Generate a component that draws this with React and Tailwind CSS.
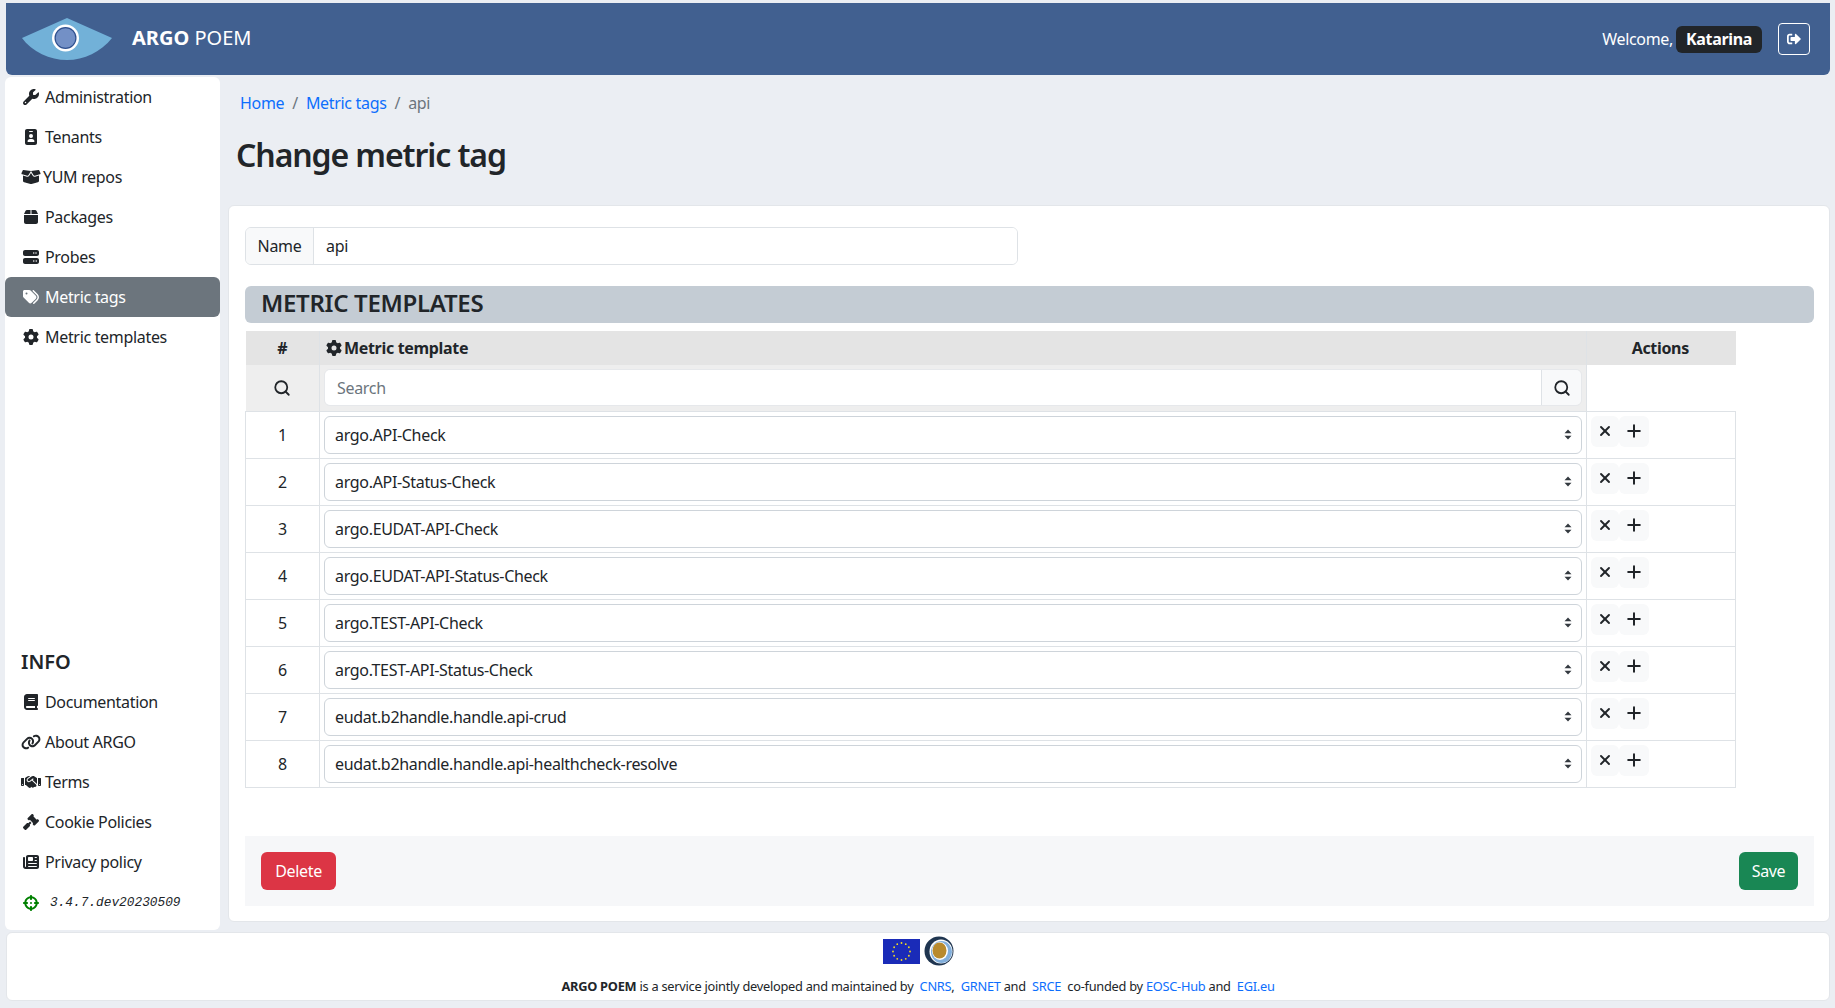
import React from "react";
import {
  FaWrench, FaIdBadge, FaBoxOpen, FaBox, FaServer, FaTags, FaGear, FaBook, FaLink,
  FaHandshake, FaGavel, FaNewspaper, FaCrosshairs,
} from "react-icons/fa6";
import { FaSignOutAlt } from "react-icons/fa";
import { Search, X, Plus } from "lucide-react";

const font = { fontFamily: '"Noto Sans", "Open Sans", sans-serif' };

const S = "w-[16px] h-[16px]";
const W = "w-[20px] h-[16px]";
const N = "w-[18px] h-[16px]";

const top = [
  [FaWrench, "Administration", S],
  [FaIdBadge, "Tenants", S],
  [FaBoxOpen, "YUM repos", W, "ml-[-2px]"],
  [FaBox, "Packages", S],
  [FaServer, "Probes", S],
  [FaTags, "Metric tags", N],
  [FaGear, "Metric templates", S],
];
const info = [
  [FaBook, "Documentation", S],
  [FaLink, "About ARGO", W],
  [FaHandshake, "Terms", W],
  [FaGavel, "Cookie Policies", S],
  [FaNewspaper, "Privacy policy", S],
];
const rows = [
  "argo.API-Check",
  "argo.API-Status-Check",
  "argo.EUDAT-API-Check",
  "argo.EUDAT-API-Status-Check",
  "argo.TEST-API-Check",
  "argo.TEST-API-Status-Check",
  "eudat.b2handle.handle.api-crud",
  "eudat.b2handle.handle.api-healthcheck-resolve",
];

function NavItem({ icon: Icon, label, size, shift = "", active }) {
  return (
    <div className={`h-10 flex items-center pl-4 rounded-md ${active ? "bg-[#6c757d] text-white" : "text-[#212529]"}`}>
      <span className="w-[24px] flex justify-center pr-[4px] shrink-0"><Icon className={`${size} shrink-0`} /></span>
      <span className={shift}>{label}</span>
    </div>
  );
}

function Eye() {
  return (
    <svg width="92" height="44" viewBox="0 0 92 44" className="block">
      <path d="M46 1 L91 21 C80 35 63 43 46 43 C29 43 11 35 1 21 Z" fill="#72b1d8" />
      <circle cx="44.5" cy="21" r="13.5" fill="#fff" />
      <circle cx="44.5" cy="21" r="11" fill="#2d4f8e" />
      <circle cx="44.5" cy="21" r="9.8" fill="#7390c6" />
    </svg>
  );
}

function EuFlag() {
  const stars = Array.from({ length: 12 }, (_, i) => {
    const a = (i * Math.PI) / 6;
    return [18.5 + 8.5 * Math.cos(a), 12.5 + 8.5 * Math.sin(a)];
  });
  return (
    <svg width="37" height="25" viewBox="0 0 37 25" className="block">
      <rect width="37" height="25" fill="#1a2bb8" />
      {stars.map(([x, y], i) => <circle key={i} cx={x} cy={y} r="0.9" fill="#f2dc22" />)}
    </svg>
  );
}

function EoscLogo() {
  return (
    <svg width="30" height="30" viewBox="0 0 30 30" className="block">
      <circle cx="15" cy="15" r="14.5" fill="#1f3550" />
      <ellipse cx="17" cy="15.5" rx="11.5" ry="12" fill="#fff" />
      <ellipse cx="17.5" cy="16" rx="10.5" ry="11" fill="#82afdc" />
      <ellipse cx="16" cy="15" rx="8" ry="9" fill="#fff" />
      <ellipse cx="15.5" cy="14.5" rx="7" ry="8" fill="#b88a2e" />
    </svg>
  );
}

function Arrows() {
  return (
    <svg width="8" height="11" viewBox="0 0 8 11" className="block">
      <path d="M4 0.5 L7.5 4.3 H0.5 Z M4 10.5 L0.5 6.7 H7.5 Z" fill="#343a40" />
    </svg>
  );
}

const td = "border border-[#dee2e6]";

export default function App() {
  return (
    <div style={font} className="w-[1835px] h-[1008px] overflow-hidden bg-[#ebeef3] text-[16px] tracking-[-0.32px] text-[#212529] pt-[3px] flex flex-col">
      <header className="h-[72px] mx-[6px] w-[1824px] rounded-b-md bg-[#416090] flex items-center justify-between pl-[15px] pr-[20px] shrink-0">
        <div className="flex items-center">
          <Eye />
          <span className="ml-[19px] mb-[3px] text-[20px] tracking-normal text-white"><b className="font-bold">ARGO</b> POEM</span>
        </div>
        <div className="flex items-center text-white">
          <span className="mb-[1px]">Welcome,</span>
          <span className="ml-[3px] h-[27px] w-[86px] justify-center rounded-md bg-[#212529] font-bold flex items-center">Katarina</span>
          <span className="ml-[16px] w-8 h-8 rounded border border-white flex items-center justify-center"><FaSignOutAlt className="text-[14px]" /></span>
        </div>
      </header>

      <div className="flex mt-[2px] shrink-0 h-[853px]">
        <aside className="ml-[5px] w-[215px] bg-white rounded-md flex flex-col">
          <nav>
            {top.map(([I, l, s, sh]) => <NavItem key={l} icon={I} label={l} size={s} shift={sh} active={l === "Metric tags"} />)}
          </nav>
          <div className="mt-auto mb-[6px]">
            <div className="h-[24px] pl-[16px] text-[20px] tracking-normal font-semibold leading-[24px] mb-[8px]">INFO</div>
            {info.map(([I, l, s]) => <NavItem key={l} icon={I} label={l} size={s} />)}
            <div className="h-[42px] flex items-center pl-4">
              <span className="w-[24px] flex justify-center pr-[4px] shrink-0"><FaCrosshairs className="text-[16px] text-[#008000]" /></span>
              <span className="ml-[5px] text-[12.8px] tracking-normal italic" style={{ fontFamily: '"Liberation Mono", monospace' }}>3.4.7.dev20230509</span>
            </div>
          </div>
        </aside>

        <main className="ml-[8px] w-[1602px]">
          <div className="h-[52px] pl-[12px] flex items-center">
            <a className="text-[#0d6efd]">Home</a>
            <span className="mx-[8px] text-[#6c757d]">/</span>
            <a className="text-[#0d6efd]">Metric tags</a>
            <span className="mx-[8px] text-[#6c757d]">/</span>
            <span className="text-[#6c757d]">api</span>
          </div>
          <h1 className="h-[48px] pl-[8px] text-[32px] leading-[48px] tracking-[-1.1px] font-semibold mt-[2px]">Change metric tag</h1>
          <section className="mt-[26px] h-[717px] bg-white rounded-md border border-[#e3e6ea] px-[15px] pt-[20px]">
            <div className="ml-[1px] mt-[1px] w-[773px] h-[38px] flex border border-[#dee2e6] rounded-md overflow-hidden">
              <span className="w-[68px] justify-center flex items-center bg-[#f8f9fa] border-r border-[#dee2e6]">Name</span>
              <input readOnly value="api" className="flex-1 px-[12px] outline-none bg-white" />
            </div>
            <div className="ml-[1px] mt-[21px] h-[37px] rounded-md bg-[#c4ccd4] pl-[16px] text-[24px] tracking-[-0.3px] font-semibold leading-[34px]">METRIC TEMPLATES</div>
            <table className="ml-[1px] mt-[8px] w-[1490px] table-fixed border-collapse">
              <colgroup>
                <col className="w-[74px]" />
                <col className="w-[1267px]" />
                <col className="w-[149px]" />
              </colgroup>
              <thead>
                <tr className="h-[34px] bg-[#e4e4e4]">
                  <th className="font-bold border-r border-[#dee2e6]">#</th>
                  <th className="font-bold text-left pl-[6px] border-r border-[#dee2e6]">
                    <span className="flex items-center"><FaGear className="text-[16px] mr-[2px]" />Metric template</span>
                  </th>
                  <th className="font-bold pr-[2px]">Actions</th>
                </tr>
                <tr className="h-[46px]">
                  <td className="bg-[#eeeeee] border-r border-[#dee2e6]">
                    <span className="flex justify-center"><Search size={18} strokeWidth={2.4} /></span>
                  </td>
                  <td className="bg-[#eeeeee] border-r border-[#dee2e6] pl-[4px] pr-[4px]">
                    <div className="h-[37px] flex rounded-md overflow-hidden border border-[#e6e8eb]">
                      <input readOnly placeholder="Search" className="flex-1 px-[12px] bg-white outline-none placeholder:text-[#6c757d]" />
                      <span className="w-[40px] bg-[#f8f9fa] border-l border-[#dee2e6] flex items-center justify-center"><Search size={18} strokeWidth={2.4} /></span>
                    </div>
                  </td>
                  <td />
                </tr>
              </thead>
              <tbody>
                {rows.map((r, i) => (
                  <tr key={r} className="h-[47px]">
                    <td className={`${td} text-center`}>{i + 1}</td>
                    <td className={`${td} pl-[4px] pr-[4px]`}>
                      <div className="h-[38px] rounded-md border border-[#ced4da] flex items-center justify-between pl-[10px] pr-[9px]">
                        <span>{r}</span>
                        <Arrows />
                      </div>
                    </td>
                    <td className={`${td} align-top pt-[4px] pl-[4px]`}>
                      <div className="flex">
                        <span className="w-[28px] h-[31px] rounded-md bg-[#f8f9fa] flex items-center justify-center"><X size={16} strokeWidth={2.8} /></span>
                        <span className="w-[30px] h-[31px] rounded-md bg-[#f8f9fa] flex items-center justify-center"><Plus size={20} strokeWidth={2.4} /></span>
                      </div>
                    </td>
                  </tr>
                ))}
              </tbody>
            </table>
            <div className="ml-[1px] mt-[48px] h-[70px] w-[1569px] bg-[#f6f7f9] flex items-center justify-between px-[16px]">
              <span className="h-[38px] w-[75px] justify-center rounded-md bg-[#dc3545] text-white flex items-center">Delete</span>
              <span className="h-[38px] w-[59px] justify-center rounded-md bg-[#198754] text-white flex items-center">Save</span>
            </div>
          </section>
        </main>
      </div>

      <footer className="mt-[2px] mx-[6px] w-[1824px] h-[69px] bg-white rounded-md border border-[#e3e6ea] flex flex-col items-center pt-[3px] shrink-0">
        <div className="flex items-center gap-[4px] h-[30px]">
          <EuFlag />
          <EoscLogo />
        </div>
        <p className="mt-[11px] text-[12.8px] tracking-[-0.26px] leading-[19px] whitespace-pre">
          <b className="font-bold">ARGO POEM</b> is a service jointly developed and maintained by  <a className="text-[#0d6efd]">CNRS</a>,  <a className="text-[#0d6efd]">GRNET</a> and  <a className="text-[#0d6efd]">SRCE</a>  co-funded by <a className="text-[#0d6efd]">EOSC-Hub</a> and  <a className="text-[#0d6efd]">EGI.eu</a>
        </p>
      </footer>
    </div>
  );
}
